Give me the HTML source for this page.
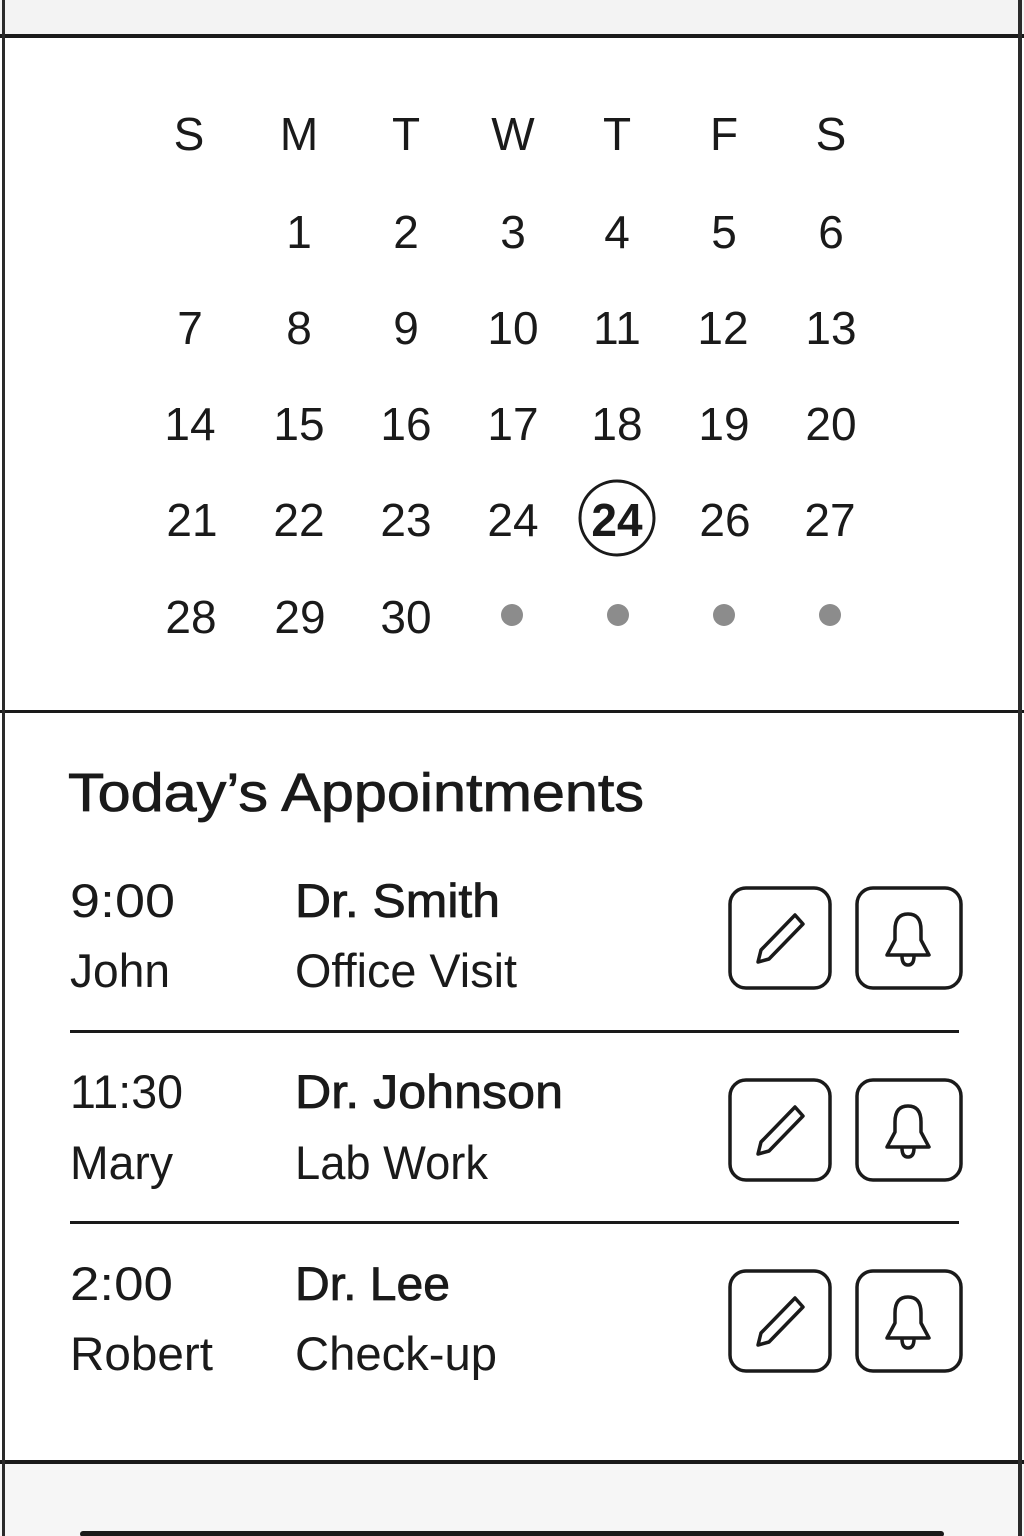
<!DOCTYPE html>
<html><head><meta charset="utf-8"><style>
html,body{margin:0;padding:0;background:#fff;}
svg{display:block;}
text{font-family:"Liberation Sans",sans-serif;fill:#1a1a1a;}
</style></head><body>
<svg width="1024" height="1536" viewBox="0 0 1024 1536" xmlns="http://www.w3.org/2000/svg">
<rect x="0" y="0" width="1024" height="1536" fill="#fff"/>
<rect x="0" y="0" width="1024" height="36" fill="#f3f3f3"/>
<rect x="0" y="1463" width="1024" height="73" fill="#f6f6f6"/>
<rect x="0" y="34" width="1024" height="4" fill="#1a1a1a"/>
<rect x="0" y="710" width="1024" height="3" fill="#1a1a1a"/>
<rect x="0" y="1460" width="1024" height="4" fill="#1a1a1a"/>
<rect x="2" y="0" width="3" height="1536" fill="#2a2a2a"/>
<rect x="1018" y="0" width="4" height="1536" fill="#2a2a2a"/>
<rect x="80" y="1531" width="864" height="6" rx="3" fill="#1a1a1a"/>
<g font-size="46" text-anchor="middle">
<text x="189" y="150">S</text><text x="299" y="150">M</text><text x="406" y="150">T</text><text x="513" y="150">W</text><text x="617" y="150">T</text><text x="724" y="150">F</text><text x="831" y="150">S</text>
<text x="299" y="248">1</text><text x="406" y="248">2</text><text x="513" y="248">3</text><text x="617" y="248">4</text><text x="724" y="248">5</text><text x="831" y="248">6</text>
<text x="190" y="344">7</text><text x="299" y="344">8</text><text x="406" y="344">9</text><text x="513" y="344">10</text><text x="617" y="344">11</text><text x="723" y="344">12</text><text x="831" y="344">13</text>
<text x="190" y="440">14</text><text x="299" y="440">15</text><text x="406" y="440">16</text><text x="513" y="440">17</text><text x="617" y="440">18</text><text x="724" y="440">19</text><text x="831" y="440">20</text>
<text x="192" y="536">21</text><text x="299" y="536">22</text><text x="406" y="536">23</text><text x="513" y="536">24</text><text x="617" y="536" font-weight="bold">24</text><text x="725" y="536">26</text><text x="830" y="536">27</text>
<text x="191" y="633">28</text><text x="300" y="633">29</text><text x="406" y="633">30</text>
</g>
<circle cx="617" cy="518" r="37" fill="none" stroke="#1a1a1a" stroke-width="3"/>
<g fill="#8c8c8c"><circle cx="512" cy="615" r="11"/><circle cx="618" cy="615" r="11"/><circle cx="724" cy="615" r="11"/><circle cx="830" cy="615" r="11"/></g>
<text x="68" y="811" font-size="54" stroke="#1a1a1a" stroke-width="0.8" textLength="576" lengthAdjust="spacingAndGlyphs">Today’s Appointments</text>
<g font-size="47" lengthAdjust="spacingAndGlyphs">
<text x="70" y="917" textLength="105" lengthAdjust="spacingAndGlyphs">9:00</text><text x="70" y="987" textLength="100" lengthAdjust="spacingAndGlyphs">John</text>
<text x="295" y="917" stroke="#1a1a1a" stroke-width="0.8" textLength="205" lengthAdjust="spacingAndGlyphs">Dr. Smith</text><text x="295" y="987" textLength="222" lengthAdjust="spacingAndGlyphs">Office Visit</text>
<text x="70" y="1108" textLength="113" lengthAdjust="spacingAndGlyphs">11:30</text><text x="70" y="1179" textLength="103" lengthAdjust="spacingAndGlyphs">Mary</text>
<text x="295" y="1108" stroke="#1a1a1a" stroke-width="0.8" textLength="268" lengthAdjust="spacingAndGlyphs">Dr. Johnson</text><text x="295" y="1179" textLength="193" lengthAdjust="spacingAndGlyphs">Lab Work</text>
<text x="70" y="1300" textLength="103" lengthAdjust="spacingAndGlyphs">2:00</text><text x="70" y="1370" textLength="143" lengthAdjust="spacingAndGlyphs">Robert</text>
<text x="295" y="1300" stroke="#1a1a1a" stroke-width="0.8" textLength="155" lengthAdjust="spacingAndGlyphs">Dr. Lee</text><text x="295" y="1370" textLength="202" lengthAdjust="spacingAndGlyphs">Check-up</text>
</g>
<rect x="70" y="1030" width="889" height="3" fill="#1a1a1a"/>
<rect x="70" y="1221" width="889" height="3" fill="#1a1a1a"/>
<defs>
<g id="btns" fill="none" stroke="#1a1a1a" stroke-width="3.5" stroke-linejoin="round">
<rect x="730" y="0" width="100" height="100" rx="16"/>
<rect x="857" y="0" width="104" height="100" rx="16"/>
<path d="M795 27 L803 36 L769 71 L758 74 L761 62 Z"/>
<path d="M887 67 L895 52 L895 42 Q895 26 908 26 Q921 26 921 42 L921 52 L929 67 Z"/>
<path d="M902 68 Q902 77 908 77 Q914 77 914 68"/>
</g>
</defs>
<use href="#btns" x="0" y="888"/>
<use href="#btns" x="0" y="1080"/>
<use href="#btns" x="0" y="1271"/>
</svg>
</body></html>
